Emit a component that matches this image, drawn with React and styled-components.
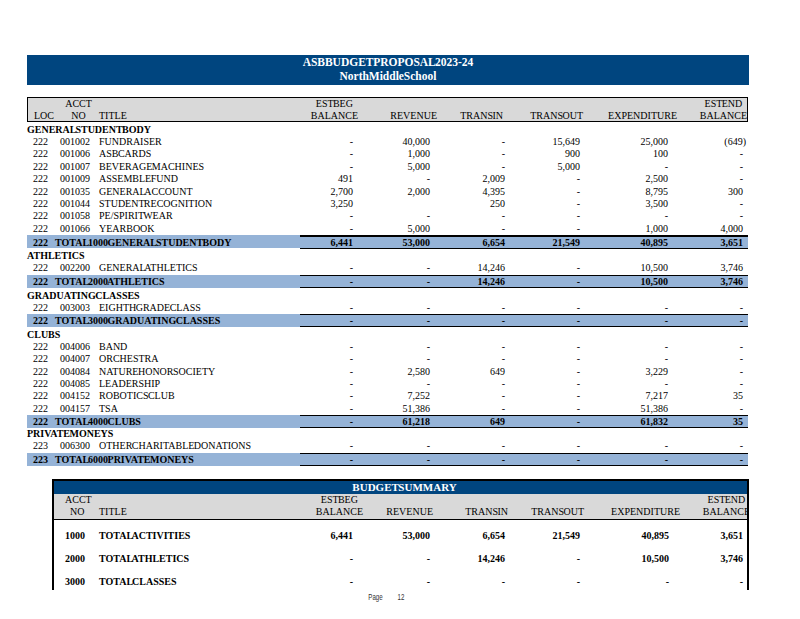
import React from 'react'
import styled, { createGlobalStyle } from 'styled-components'

const GlobalStyle = createGlobalStyle`
  html, body {
    margin: 0;
    padding: 0;
    background: #fff;
  }
  body {
    font-family: "Liberation Serif", "Times New Roman", serif;
    color: #000;
  }
`

// column layout of the main sheet (x 27 -> 748)
const COLS = '33px 37px 203px 56px 77px 75px 75px 97px 68px'
const HEAD_COLS = '32px 37px 203px 56px 77px 75px 75px 97px 67px'
const SUM_COLS = '43px 203px 56px 77px 75px 75px 97px 67px'

const NUM_PAD = [3, 3, 3, 3, 12, 5]
const SUM_PAD = [3, 3, 3, 3, 11, 4]

const Page = styled.div`
  width: 800px;
  height: 619px;
  overflow: hidden;
  box-sizing: border-box;
  padding: 55px 0 0 27px;
`

const Sheet = styled.div`
  width: 722px;
`

const TitleBar = styled.div`
  height: 30px;
  background: #00457f;
  color: #fff;
  font-weight: bold;
  font-size: 11.5px;
  line-height: 14px;
  text-align: center;
  word-spacing: -3px;
`

const HeadBox = styled.div`
  width: 721px;
  height: 25px;
  margin-top: 12px;
  box-sizing: border-box;
  border: 1px solid #000;
  background: #d9d9d9;
  display: grid;
  grid-template-columns: ${p => p.$cols};
  font-size: 10px;
`

const HeadCell = styled.div`
  display: flex;
  flex-direction: column;
  justify-content: flex-end;
  align-items: ${p => p.$items || 'center'};
  justify-self: ${p => p.$self || 'end'};
  margin-right: ${p => p.$mr || 0}px;
  padding-left: ${p => p.$pl || 0}px;
  line-height: ${p => p.$lh || 11.5}px;
  white-space: nowrap;
  word-spacing: -3px;
`

const Line = styled.span`
  padding-left: ${p => p.$pl || 0}px;
`

const Body = styled.div`
  width: 721px;
  font-size: 10px;
  white-space: nowrap;
`

const Section = styled.div`
  margin-top: ${p => p.$gap}px;
  height: 12px;
  line-height: 12px;
  font-weight: bold;
  word-spacing: -3px;
`

const Row = styled.div`
  display: grid;
  grid-template-columns: ${COLS};
  height: 12.4px;
  line-height: 12.4px;
`

const Loc = styled.span`
  padding-left: 6px;
`

const Acct = styled.span``

const Title = styled.span`
  padding-left: 2px;
  word-spacing: -3px;
`

const Num = styled.span`
  display: flex;
  align-items: center;
  justify-content: flex-end;
  padding-right: ${p => p.$pr}px;
`

const TotalRow = styled(Row)`
  height: 13px;
  line-height: 11px;
  background: #95b3d7;
  font-weight: bold;
`

const TotalLabel = styled.div`
  grid-column: 1 / 4;
  display: flex;
  align-items: center;
  padding-left: 6px;
  word-spacing: -3px;
`

const TotalLoc = styled.span`
  width: 22px;
  flex-shrink: 0;
`

const TotalNum = styled(Num)`
  box-sizing: border-box;
  border-top: ${p => (p.$thick ? 2 : 1)}px solid #000;
  border-bottom: 1px solid #000;
`

const Summary = styled.div`
  width: 697px;
  height: 111px;
  margin: 13px 0 0 25px;
  box-sizing: border-box;
  border: 2px solid #000;
  border-bottom: none;
  overflow: hidden;
`

const SumBar = styled.div`
  height: 13px;
  line-height: 13px;
  background: #00457f;
  color: #fff;
  font-weight: bold;
  font-size: 11px;
  text-align: center;
  padding-left: 8px;
  word-spacing: -3px;
`

const SumHead = styled(HeadBox)`
  width: auto;
  height: 26px;
  margin: 0;
  border: none;
  border-bottom: 1px solid #000;
`

const SumRows = styled.div`
  padding-top: 4px;
  font-size: 10px;
  font-weight: bold;
  white-space: nowrap;
`

const SumRow = styled.div`
  display: grid;
  grid-template-columns: ${SUM_COLS};
  height: 23px;
  line-height: 23px;
`

const SumAcct = styled.span`
  padding-left: 11px;
`

const Footer = styled.div`
  display: flex;
  justify-content: center;
  gap: 10px;
  margin-top: 2px;
  padding-right: 5px;
  font-family: "Liberation Sans", Arial, sans-serif;
  font-size: 9px;
  line-height: 10px;
  color: #333;
`

const Narrow = styled.span`
  display: inline-block;
  transform: scaleX(0.68);
`

const sections = [
  {
    name: 'GENERAL STUDENT BODY',
    gap: 2,
    rows: [
      ['222', '001002', 'FUNDRAISER', '-', '40,000', '-', '15,649', '25,000', '(649)'],
      ['222', '001006', 'ASB CARDS', '-', '1,000', '-', '900', '100', '-'],
      ['222', '001007', 'BEVERAGE MACHINES', '-', '5,000', '-', '5,000', '-', '-'],
      ['222', '001009', 'ASSEMBLE FUND', '491', '-', '2,009', '-', '2,500', '-'],
      ['222', '001035', 'GENERAL ACCOUNT', '2,700', '2,000', '4,395', '-', '8,795', '300'],
      ['222', '001044', 'STUDENT RECOGNITION', '3,250', '', '250', '-', '3,500', '-'],
      ['222', '001058', 'PE/SPIRIT WEAR', '-', '-', '-', '-', '-', '-'],
      ['222', '001066', 'YEARBOOK', '-', '5,000', '-', '-', '1,000', '4,000']
    ],
    total: ['222', 'TOTAL 1000 GENERAL STUDENT BODY', '6,441', '53,000', '6,654', '21,549', '40,895', '3,651'],
    thick: true
  },
  {
    name: 'ATHLETICS',
    gap: 2,
    rows: [['222', '002200', 'GENERAL ATHLETICS', '-', '-', '14,246', '-', '10,500', '3,746']],
    total: ['222', 'TOTAL 2000 ATHLETICS', '-', '-', '14,246', '-', '10,500', '3,746']
  },
  {
    name: 'GRADUATING CLASSES',
    gap: 2,
    rows: [['222', '003003', 'EIGHTH GRADE CLASS', '-', '-', '-', '-', '-', '-']],
    total: ['222', 'TOTAL 3000 GRADUATING CLASSES', '-', '-', '-', '-', '-', '-']
  },
  {
    name: 'CLUBS',
    gap: 2,
    rows: [
      ['222', '004006', 'BAND', '-', '-', '-', '-', '-', '-'],
      ['222', '004007', 'ORCHESTRA', '-', '-', '-', '-', '-', '-'],
      ['222', '004084', 'NATURE HONOR SOCIETY', '-', '2,580', '649', '-', '3,229', '-'],
      ['222', '004085', 'LEADERSHIP', '-', '-', '-', '-', '-', '-'],
      ['222', '004152', 'ROBOTICS CLUB', '-', '7,252', '-', '-', '7,217', '35'],
      ['222', '004157', 'TSA', '-', '51,386', '-', '-', '51,386', '-']
    ],
    total: ['222', 'TOTAL 4000 CLUBS', '-', '61,218', '649', '-', '61,832', '35']
  },
  {
    name: 'PRIVATE MONEYS',
    gap: 0,
    rows: [['223', '006300', 'OTHER CHARITABLE DONATIONS', '-', '-', '-', '-', '-', '-']],
    total: ['223', 'TOTAL 6000 PRIVATE MONEYS', '-', '-', '-', '-', '-', '-']
  }
]

const summary = [
  ['1000', 'TOTAL ACTIVITIES', '6,441', '53,000', '6,654', '21,549', '40,895', '3,651'],
  ['2000', 'TOTAL ATHLETICS', '-', '-', '14,246', '-', '10,500', '3,746'],
  ['3000', 'TOTAL CLASSES', '-', '-', '-', '-', '-', '-']
]

// negative values in brackets sit past the ")" gap of the accounting format
const pad = (pads, i, v) => (v.startsWith('(') ? pads[i] - 3 : pads[i])

const numHeads = [
  ['EST BEG', 'BALANCE'],
  ['', 'REVENUE'],
  ['', 'TRANS IN'],
  ['', 'TRANS OUT'],
  ['', 'EXPENDITURE'],
  ['EST END', 'BALANCE']
]

function NumHeads({ shifts }) {
  return numHeads.map(([a, b], i) => (
    <HeadCell key={i} $mr={shifts[i]}>
      {a && <Line>{a}</Line>}
      <Line>{b}</Line>
    </HeadCell>
  ))
}

export default function App() {
  return (
    <Page>
      <GlobalStyle />
      <Sheet>
        <TitleBar>
          <div>ASB BUDGET PROPOSAL 2023-24</div>
          <div>North Middle School</div>
        </TitleBar>

        <HeadBox $cols={HEAD_COLS}>
          <HeadCell $self="center">
            <Line>LOC</Line>
          </HeadCell>
          <HeadCell $self="center">
            <Line>ACCT</Line>
            <Line>NO</Line>
          </HeadCell>
          <HeadCell $self="start" $items="flex-start" $pl={2}>
            <Line>TITLE</Line>
          </HeadCell>
          <NumHeads shifts={[-2, -4, 5, 0, 3, 0]} />
        </HeadBox>

        <Body>
          {sections.map(sec => (
            <React.Fragment key={sec.name}>
              <Section $gap={sec.gap}>{sec.name}</Section>
              {sec.rows.map(r => (
                <Row key={r[1]}>
                  <Loc>{r[0]}</Loc>
                  <Acct>{r[1]}</Acct>
                  <Title>{r[2]}</Title>
                  {r.slice(3).map((v, i) => (
                    <Num key={i} $pr={pad(NUM_PAD, i, v)}>
                      {v}
                    </Num>
                  ))}
                </Row>
              ))}
              <TotalRow>
                <TotalLabel>
                  <TotalLoc>{sec.total[0]}</TotalLoc>
                  {sec.total[1]}
                </TotalLabel>
                {sec.total.slice(2).map((v, i) => (
                  <TotalNum key={i} $pr={pad(NUM_PAD, i, v)} $thick={sec.thick}>
                    {v}
                  </TotalNum>
                ))}
              </TotalRow>
            </React.Fragment>
          ))}
        </Body>

        <Summary>
          <SumBar>BUDGET SUMMARY</SumBar>
          <SumHead $cols={SUM_COLS}>
            <HeadCell $self="start" $items="flex-start" $pl={11} $lh={12.5}>
              <Line>ACCT</Line>
              <Line $pl={5}>NO</Line>
            </HeadCell>
            <HeadCell $self="start" $items="flex-start" $pl={2} $lh={12.5}>
              <Line>TITLE</Line>
            </HeadCell>
            {numHeads.map(([a, b], i) => (
              <HeadCell key={i} $mr={[-7, 0, 0, -1, 0, -3][i]} $lh={12.5}>
                {a && <Line>{a}</Line>}
                <Line>{b}</Line>
              </HeadCell>
            ))}
          </SumHead>
          <SumRows>
            {summary.map(r => (
              <SumRow key={r[0]}>
                <SumAcct>{r[0]}</SumAcct>
                <Title>{r[1]}</Title>
                {r.slice(2).map((v, i) => (
                  <Num key={i} $pr={pad(SUM_PAD, i, v)}>
                    {v}
                  </Num>
                ))}
              </SumRow>
            ))}
          </SumRows>
        </Summary>

        <Footer>
          <Narrow>Page</Narrow>
          <Narrow>12</Narrow>
        </Footer>
      </Sheet>
    </Page>
  )
}
